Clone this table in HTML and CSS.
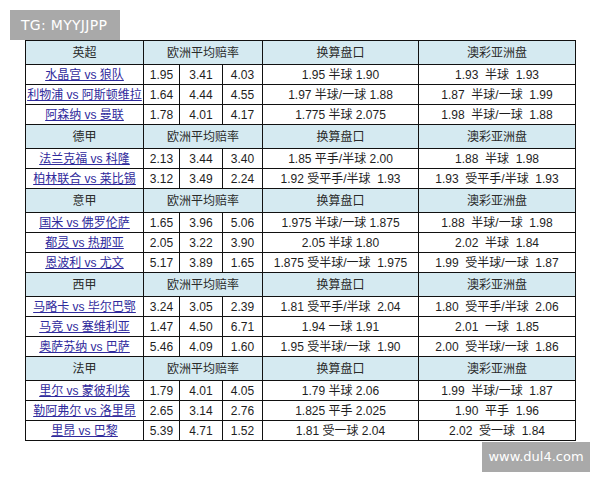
FILE: index.html
```html
<!DOCTYPE html>
<html lang="zh">
<head>
<meta charset="utf-8">
<link rel="stylesheet" href="styles.css">
</head>
<body>
<div class="page">
  <div class="tag">TG: MYYJJPP</div>
  <table class="odds">
    <colgroup>
      <col class="c-team"><col class="c-o1"><col class="c-o2"><col class="c-o3"><col class="c-conv"><col class="c-macau">
    </colgroup>
    <tbody>
      <tr class="head"><td>英超</td><td colspan="3">欧洲平均赔率</td><td>换算盘口</td><td>澳彩亚洲盘</td></tr>
      <tr><td><a href="#">水晶宫 vs 狼队</a></td><td>1.95</td><td>3.41</td><td>4.03</td><td>1.95 半球 1.90</td><td>1.93&nbsp; 半球&nbsp; 1.93</td></tr>
      <tr><td><a href="#">利物浦 vs 阿斯顿维拉</a></td><td>1.64</td><td>4.44</td><td>4.55</td><td>1.97 半球/一球 1.88</td><td>1.87&nbsp; 半球/一球&nbsp; 1.99</td></tr>
      <tr><td><a href="#">阿森纳 vs 曼联</a></td><td>1.78</td><td>4.01</td><td>4.17</td><td>1.775 半球 2.075</td><td>1.98&nbsp; 半球/一球&nbsp; 1.88</td></tr>

      <tr class="head"><td>德甲</td><td colspan="3">欧洲平均赔率</td><td>换算盘口</td><td>澳彩亚洲盘</td></tr>
      <tr><td><a href="#">法兰克福 vs 科隆</a></td><td>2.13</td><td>3.44</td><td>3.40</td><td>1.85 平手/半球 2.00</td><td>1.88&nbsp; 半球&nbsp; 1.98</td></tr>
      <tr><td><a href="#">柏林联合 vs 莱比锡</a></td><td>3.12</td><td>3.49</td><td>2.24</td><td>1.92 受平手/半球&nbsp; 1.93</td><td>1.93&nbsp; 受平手/半球&nbsp; 1.93</td></tr>

      <tr class="head"><td>意甲</td><td colspan="3">欧洲平均赔率</td><td>换算盘口</td><td>澳彩亚洲盘</td></tr>
      <tr><td><a href="#">国米 vs 佛罗伦萨</a></td><td>1.65</td><td>3.96</td><td>5.06</td><td>1.975 半球/一球 1.875</td><td>1.88&nbsp; 半球/一球&nbsp; 1.98</td></tr>
      <tr><td><a href="#">都灵 vs 热那亚</a></td><td>2.05</td><td>3.22</td><td>3.90</td><td>2.05 半球 1.80</td><td>2.02&nbsp; 半球&nbsp; 1.84</td></tr>
      <tr><td><a href="#">恩波利 vs 尤文</a></td><td>5.17</td><td>3.89</td><td>1.65</td><td>1.875 受半球/一球&nbsp; 1.975</td><td>1.99&nbsp; 受半球/一球&nbsp; 1.87</td></tr>

      <tr class="head"><td>西甲</td><td colspan="3">欧洲平均赔率</td><td>换算盘口</td><td>澳彩亚洲盘</td></tr>
      <tr><td><a href="#">马略卡 vs 毕尔巴鄂</a></td><td>3.24</td><td>3.05</td><td>2.39</td><td>1.81 受平手/半球&nbsp; 2.04</td><td>1.80&nbsp; 受平手/半球&nbsp; 2.06</td></tr>
      <tr><td><a href="#">马竞 vs 塞维利亚</a></td><td>1.47</td><td>4.50</td><td>6.71</td><td>1.94 一球 1.91</td><td>2.01&nbsp; 一球&nbsp; 1.85</td></tr>
      <tr><td><a href="#">奥萨苏纳 vs 巴萨</a></td><td>5.46</td><td>4.09</td><td>1.60</td><td>1.95 受半球/一球&nbsp; 1.90</td><td>2.00&nbsp; 受半球/一球&nbsp; 1.86</td></tr>

      <tr class="head"><td>法甲</td><td colspan="3">欧洲平均赔率</td><td>换算盘口</td><td>澳彩亚洲盘</td></tr>
      <tr><td><a href="#">里尔 vs 蒙彼利埃</a></td><td>1.79</td><td>4.01</td><td>4.05</td><td>1.79 半球 2.06</td><td>1.99&nbsp; 半球/一球&nbsp; 1.87</td></tr>
      <tr><td><a href="#">勒阿弗尔 vs 洛里昂</a></td><td>2.65</td><td>3.14</td><td>2.76</td><td>1.825 平手 2.025</td><td>1.90&nbsp; 平手&nbsp; 1.96</td></tr>
      <tr><td><a href="#">里昂 vs 巴黎</a></td><td>5.39</td><td>4.71</td><td>1.52</td><td>1.81 受一球 2.04</td><td>2.02&nbsp; 受一球&nbsp; 1.84</td></tr>
    </tbody>
  </table>
  <div class="footer"><div class="site">www.dul4.com</div></div>
</div>
</body>
</html>
```

FILE: styles.css
```css
html, body {
  margin: 0;
  padding: 0;
  background: #ffffff;
}

.page {
  width: 600px;
  height: 480px;
  padding-top: 10px;
  box-sizing: border-box;
  font-family: "Liberation Sans", "Noto Sans CJK SC", sans-serif;
}

.tag {
  margin-left: 10px;
  width: 110px;
  height: 30px;
  background: #a9a9a9;
  color: #ffffff;
  font-family: "DejaVu Sans", "Liberation Sans", sans-serif;
  font-size: 14px;
  line-height: 30px;
  padding-left: 11px;
  box-sizing: border-box;
  letter-spacing: 0.3px;
  white-space: nowrap;
}

.odds {
  margin-left: 25px;
  width: 551px;
  border-collapse: collapse;
  table-layout: fixed;
  font-size: 12px;
  color: #1e1e1e;
}

.c-team { width: 118px; }
.c-o1 { width: 36px; }
.c-o2 { width: 43px; }
.c-o3 { width: 40px; }
.c-conv { width: 156px; }
.c-macau { width: 157px; }

.odds td {
  border: 1px solid #111111;
  text-align: center;
  padding: 0;
  height: 19px;
  line-height: 18px;
  white-space: nowrap;
  overflow: hidden;
}

.odds tr.head td {
  background: #d5eaf1;
  height: 23px;
  color: #2a2a2a;
}

.odds a {
  color: #2f2a9c;
  text-decoration: underline;
}

.footer {
  display: flex;
  justify-content: flex-end;
  padding-right: 10px;
  margin-top: 1px;
}

.site {
  width: 108px;
  height: 30px;
  background: #a9a9a9;
  color: #ffffff;
  font-family: "DejaVu Sans", "Liberation Sans", sans-serif;
  font-size: 13px;
  line-height: 30px;
  text-align: center;
}
```
